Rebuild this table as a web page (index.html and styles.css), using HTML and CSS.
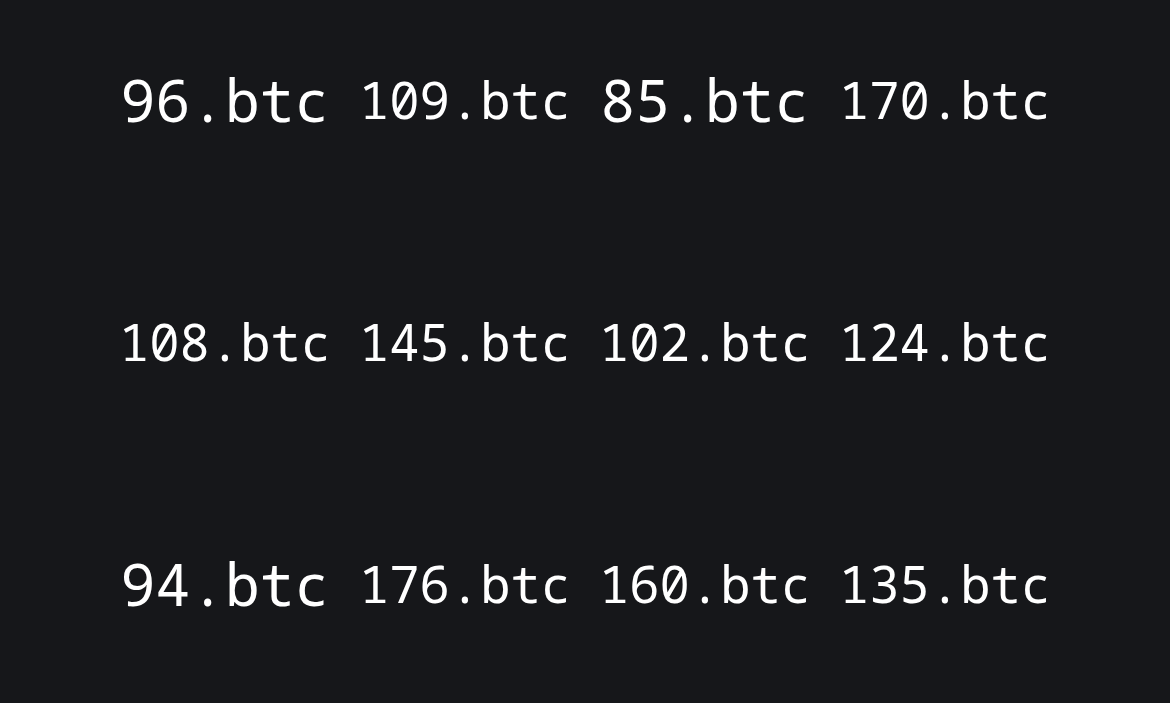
FILE: index.html
```html
<!DOCTYPE html>
<html lang="en">
<head>
  <meta charset="UTF-8" />
  <meta name="viewport" content="width=device-width, initial-scale=1.0"/>
  <title>Names</title>
  <link rel="stylesheet" href="styles.css">
</head>
<body>

<!-- Name grid -->
<div class="grid">
  <div class="cell"><span class="name short">96.btc</span></div>
  <div class="cell"><span class="name">109.btc</span></div>
  <div class="cell"><span class="name short">85.btc</span></div>
  <div class="cell"><span class="name">170.btc</span></div>

  <div class="cell"><span class="name">108.btc</span></div>
  <div class="cell"><span class="name">145.btc</span></div>
  <div class="cell"><span class="name">102.btc</span></div>
  <div class="cell"><span class="name">124.btc</span></div>

  <div class="cell"><span class="name short">94.btc</span></div>
  <div class="cell"><span class="name">176.btc</span></div>
  <div class="cell"><span class="name">160.btc</span></div>
  <div class="cell"><span class="name">135.btc</span></div>
</div>

</body>
</html>
```

FILE: styles.css
```css
html, body {
  margin: 0; padding: 0;
  overflow: hidden;
  background: #16171a;
  font-family: "Noto Sans Mono", "DejaVu Sans Mono", monospace;
  color: #fff;
}

.grid {
  display: grid;
  grid-template-columns: repeat(4, 205px);
  grid-auto-rows: 200px;
  column-gap: 35px;
  row-gap: 42px;
  justify-content: center;
}

.cell {
  display: flex;
  align-items: center;
  justify-content: center;
  white-space: nowrap;
}

.name { font-size: 50.5px; line-height: 1; }
.name.short { font-size: 58px; }
```
